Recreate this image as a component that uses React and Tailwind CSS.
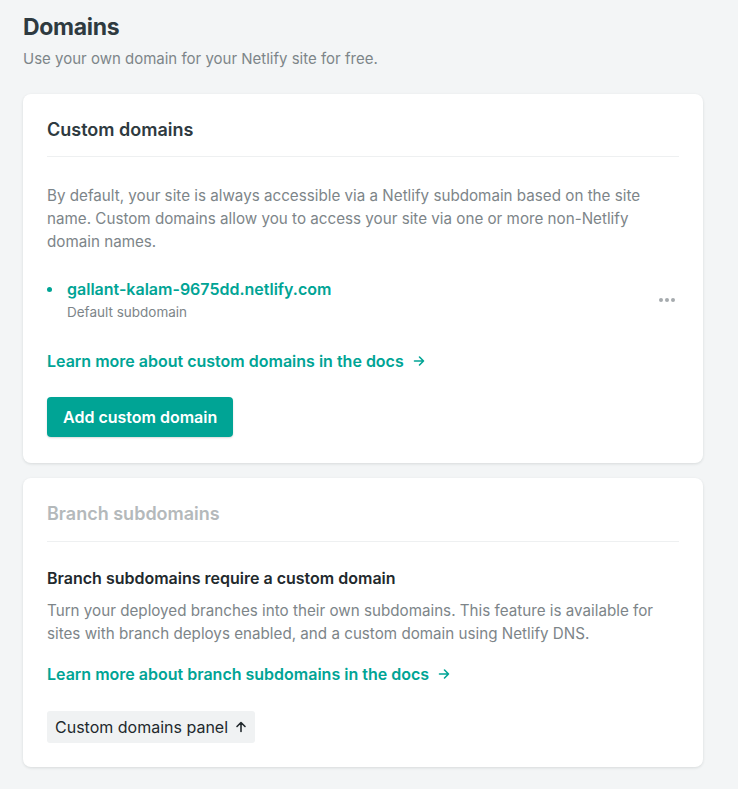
import React from "react";

const Arrow = ({ dir = "right" }) => (
  <svg
    width="12"
    height="12"
    viewBox="0 0 12 12"
    fill="none"
    stroke="currentColor"
    strokeWidth="1.6"
    strokeLinecap="round"
    strokeLinejoin="round"
    className={dir === "up" ? "-rotate-90" : ""}
  >
    <path d="M1.5 6h9M6.5 2l4 4-4 4" />
  </svg>
);

const Card = ({ children, bottom = "pb-6" }) => (
  <div className={`bg-white rounded-lg shadow-[0_1px_3px_rgba(14,30,37,0.12)] px-6 pt-6 ${bottom}`}>
    {children}
  </div>
);

export default function App() {
  return (
    <div
      className="min-h-screen bg-[#f3f5f6] pl-[23px] pr-[35px] pt-[13px] pb-6 text-[#2e3a40]"
      style={{ fontFamily: "Inter, 'Noto Sans', sans-serif" }}
    >
      <h1 className="text-[23px] font-bold leading-[28px] text-[#2e3a40] tracking-[-0.3px]">Domains</h1>
      <p className="mt-[7px] text-[15px] text-[#7d8589] leading-[22px]">
        Use your own domain for your Netlify site for free.
      </p>

      <div className="mt-[24px] flex flex-col gap-[15px]">
        <Card bottom="pb-[26px]">
          <h2 className="text-[18px] font-semibold leading-[24px] text-[#2e3a40] pb-[14px] border-b border-[#eef0f1]">
            Custom domains
          </h2>
          <p className="mt-[27px] text-[15.2px] leading-[23px] text-[#7d8589]">
            By default, your site is always accessible via a Netlify subdomain based on the site
            name. Custom domains allow you to access your site via one or more non-Netlify
            domain names.
          </p>

          <div className="mt-[25px] flex items-center">
            <div className="flex-1 flex">
              <span className="w-[5px] h-[5px] rounded-full bg-[#00a495] mt-[9px] mr-[15px]" />
              <div>
                <div className="text-[16px] font-semibold leading-[22px] text-[#00a495]">
                  gallant-kalam-9675dd.netlify.com
                </div>
                <div className="text-[13.5px] leading-[20px] text-[#7d8589] mt-[2px]">Default subdomain</div>
              </div>
            </div>
            <div className="flex gap-[2px] mr-1">
              <span className="w-[4px] h-[4px] rounded-full bg-[#a6abae]" />
              <span className="w-[4px] h-[4px] rounded-full bg-[#a6abae]" />
              <span className="w-[4px] h-[4px] rounded-full bg-[#a6abae]" />
            </div>
          </div>

          <a className="mt-[28px] flex items-center gap-[9px] text-[16px] font-semibold leading-[22px] text-[#00a495]">
            Learn more about custom domains in the docs
            <Arrow />
          </a>

          <button className="mt-[25px] h-[40px] px-4 rounded-[4px] bg-[#00a495] text-white text-[16px] font-semibold shadow-[0_1px_2px_rgba(0,0,0,0.15)]">
            Add custom domain
          </button>
        </Card>

        <Card>
          <h2 className="text-[18px] font-semibold leading-[24px] text-[#b4b9bb] pb-[15px] border-b border-[#eef0f1]">
            Branch subdomains
          </h2>
          <h3 className="mt-[25px] text-[16px] font-semibold leading-[22px] text-[#22292d]">
            Branch subdomains require a custom domain
          </h3>
          <p className="mt-[10px] text-[15.2px] leading-[23px] text-[#7d8589]">
            Turn your deployed branches into their own subdomains. This feature is available for
            sites with branch deploys enabled, and a custom domain using Netlify DNS.
          </p>
          <a className="mt-[18px] flex items-center gap-[9px] text-[16px] font-semibold leading-[22px] text-[#00a495]">
            Learn more about branch subdomains in the docs
            <Arrow />
          </a>
          <button className="mt-[26px] h-[32px] px-[8px] rounded-[3px] bg-[#f0f2f3] text-[16px] leading-[22px] text-[#22292d] flex items-center gap-[7px]">
            Custom domains panel
            <Arrow dir="up" />
          </button>
        </Card>
      </div>
    </div>
  );
}
